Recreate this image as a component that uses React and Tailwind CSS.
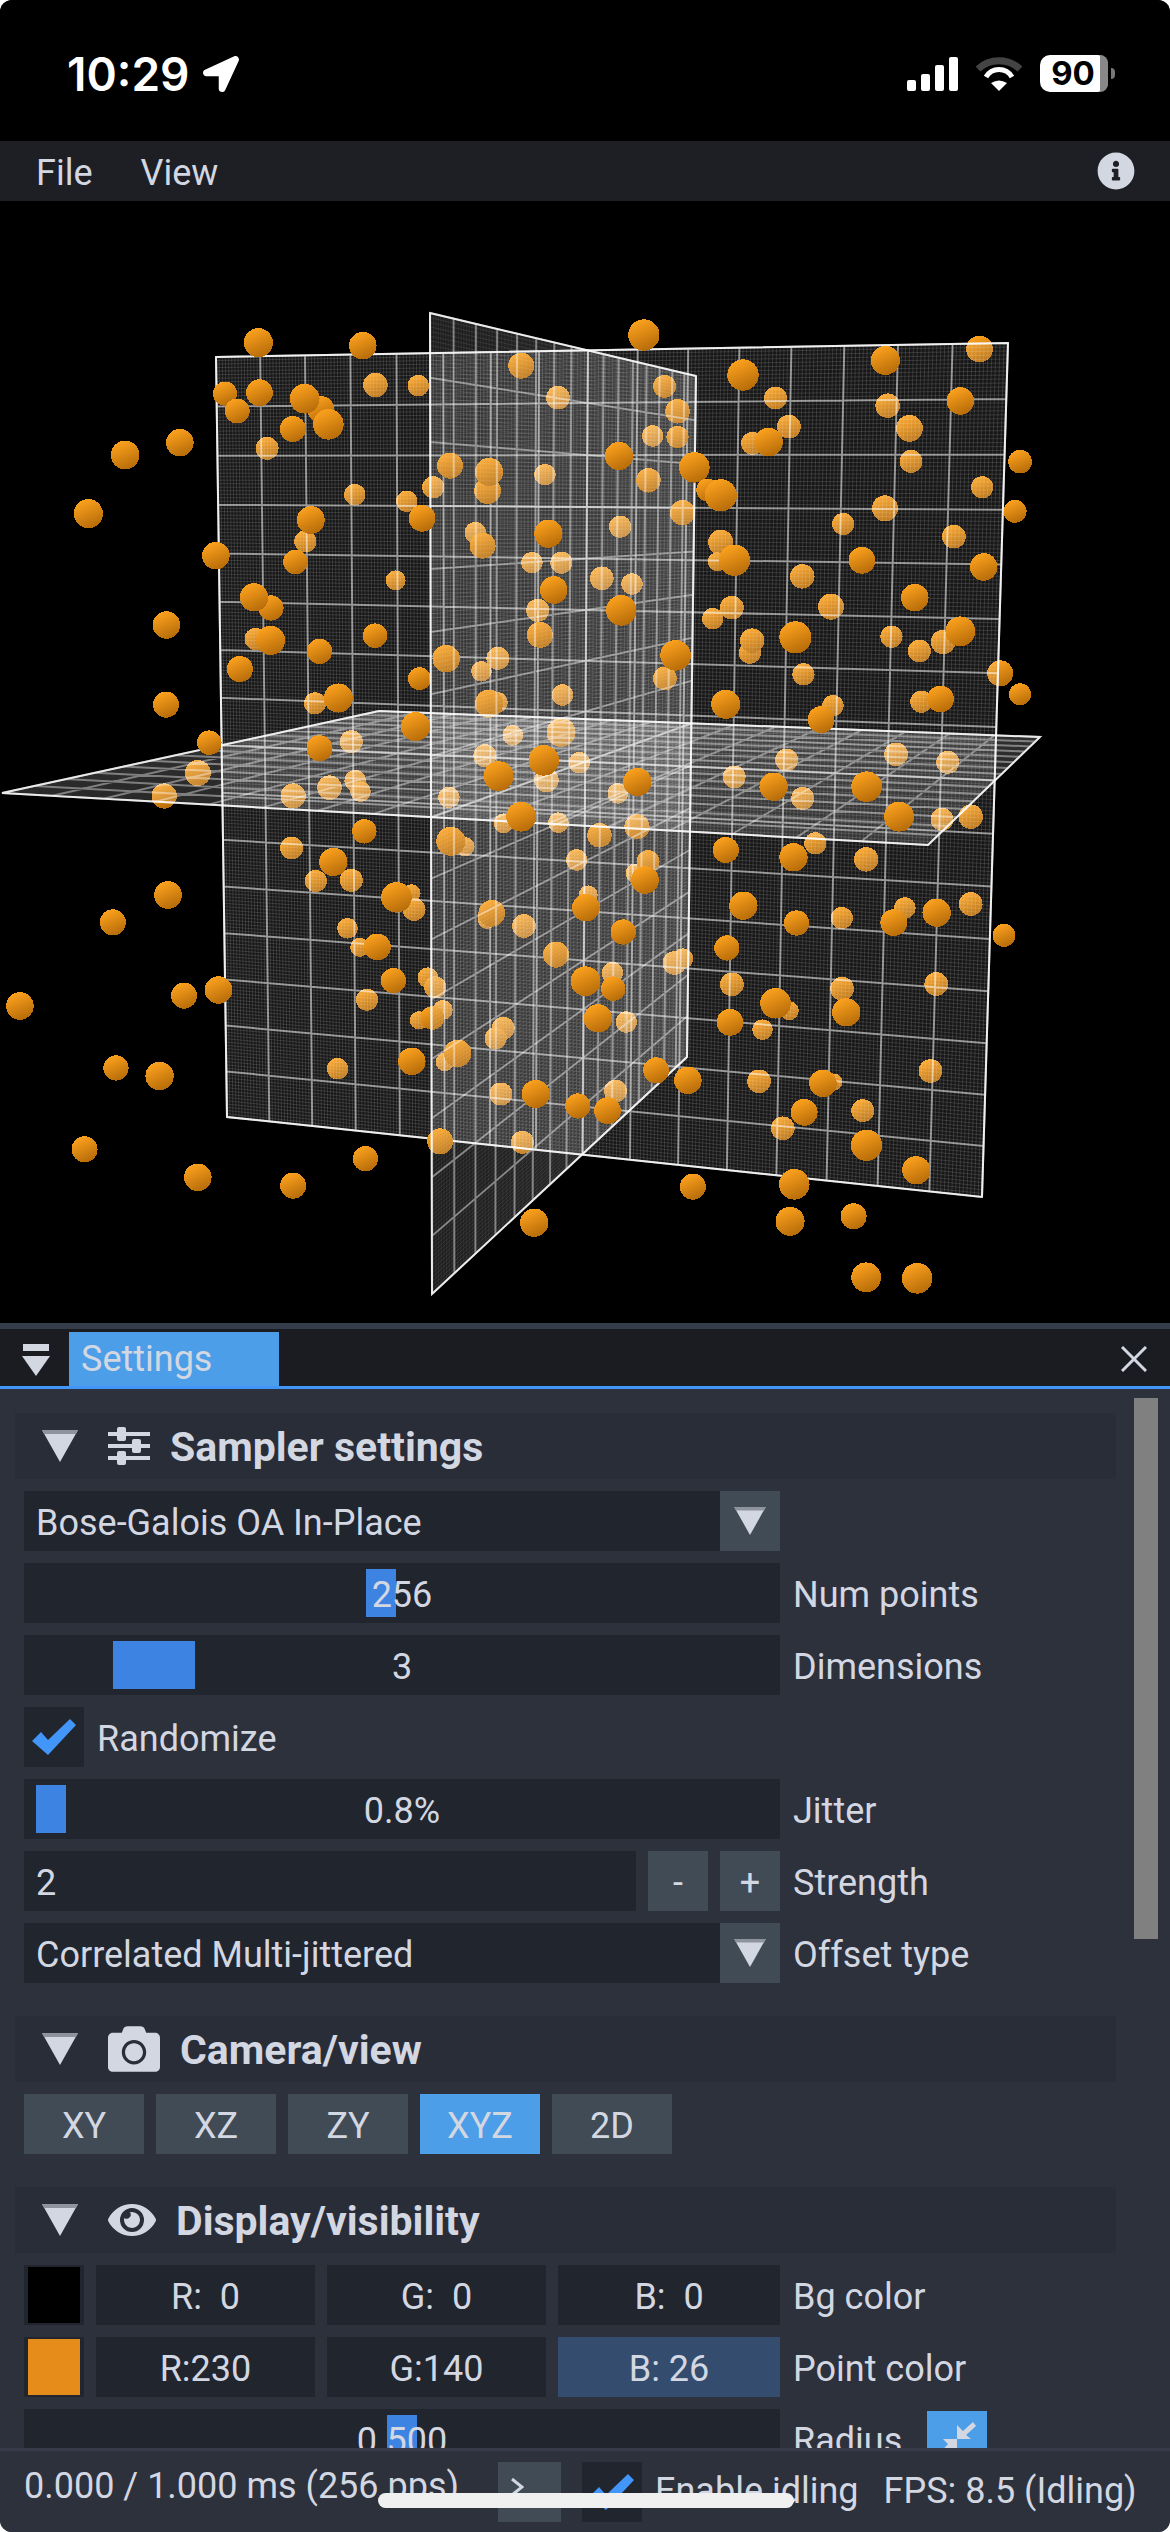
import React from 'react';
import { FaCamera, FaEye, FaInfoCircle, FaLocationArrow } from 'react-icons/fa';

// perspective map of the unit square onto a quad
const quadMap = ([p0, p1, p2, p3]) => {
  const dx1 = p1[0] - p2[0], dx2 = p3[0] - p2[0], sx = p0[0] - p1[0] + p2[0] - p3[0];
  const dy1 = p1[1] - p2[1], dy2 = p3[1] - p2[1], sy = p0[1] - p1[1] + p2[1] - p3[1];
  const den = dx1 * dy2 - dx2 * dy1;
  const g = (sx * dy2 - dx2 * sy) / den;
  const h = (dx1 * sy - sx * dy1) / den;
  const a = p1[0] - p0[0] + g * p1[0], b = p3[0] - p0[0] + h * p3[0], c = p0[0];
  const d = p1[1] - p0[1] + g * p1[1], e = p3[1] - p0[1] + h * p3[1], f = p0[1];
  return (u, v) => {
    const w = g * u + h * v + 1;
    return [(a * u + b * v + c) / w, (d * u + e * v + f) / w];
  };
};

const gridPath = (corners, divisions) => {
  const map = quadMap(corners);
  let out = '';
  for (let i = 0; i <= divisions; i++) {
    const t = i / divisions;
    const [ax, ay] = map(t, 0), [bx, by] = map(t, 1), [cx, cy] = map(0, t), [dx, dy] = map(1, t);
    out += `M${ax.toFixed(1)} ${ay.toFixed(1)}L${bx.toFixed(1)} ${by.toFixed(1)}M${cx.toFixed(1)} ${cy.toFixed(1)}L${dx.toFixed(1)} ${dy.toFixed(1)}`;
  }
  return out;
};

const PLANES = {
  back: [[216, 357], [1008, 343], [982, 1197], [227, 1117]],
  floor: [[2, 793], [379, 711], [1040, 737], [928, 845]],
  mid: [[430, 313], [696, 376], [687, 1057], [432, 1294]],
};

const Plane = ({ corners, fine = 0.13, major = 0.5 }) => (
  <g fill="none">
    <polygon points={corners.map((p) => p.join(',')).join(' ')} fill="#fff" fillOpacity="0.09" />
    <path d={gridPath(corners, 224)} stroke="#fff" strokeOpacity={fine} strokeWidth="1" />
    <path d={gridPath(corners, 16)} stroke="#fff" strokeOpacity={major} strokeWidth="2" />
    <polygon points={corners.map((p) => p.join(',')).join(' ')} stroke="#fff" strokeOpacity="0.85" strokeWidth="2" />
  </g>
);

// measured from the reference: [x, y, width, layer], layer 1 = behind back plane, 2 = behind mid plane, 0 = in front
const CROPS = [
  { ox: 0, oy: 280, pts: [
    [675,188,76,0],[948,197,72,0],[981,315,64,1],[1093,317,56,1],[588,341,63,0],[678,338,70,0],[838,388,70,0],[796,356,78,0],[858,433,80,0],[620,393,65,0],[765,447,68,0],[698,505,60,1],
    [327,525,75,0],[470,488,72,0],[231,701,76,0],[1362,257,68,2],[1458,353,62,1],[1176,557,68,2],[1274,632,70,2],[1278,576,74,2],[1132,622,58,1],[1424,584,56,1],[927,644,56,1],[1063,664,56,1],
    [1103,715,70,0],[812,720,73,0],[798,784,58,1],[772,846,64,0],[564,827,72,0],[1242,758,56,1],[1261,797,68,2],[1433,761,74,0],[1390,848,56,1],[1467,848,58,1],[1447,930,72,0],[1405,991,60,1],
    [1034,901,52,1],[708,984,66,0],[664,952,74,0],[1411,1065,68,2],[435,1035,72,0],[980,1067,64,0],[668,1077,58,1],[707,1081,76,0],[835,1114,66,0],[1166,1136,72,2],[1301,1135,60,1],[1258,1174,54,1],
    [627,1167,68,0],[1096,1196,60,2],[434,1274,68,0],[823,1270,58,1],[884,1254,76,0],[1300,1267,54,1],[1278,1271,74,2],[1470,1245,56,1],[1086,1340,76,0],[547,1388,64,0],[835,1405,68,0],[918,1385,60,1],
    [1340,1366,54,1],[1466,1357,76,2],[1267,1427,60,1],[1421,1441,80,0],[1514,1448,56,1],[1303,1488,78,0],[1428,1500,64,1],[517,1479,68,1],[429,1548,66,1],[928,1502,56,1],[861,1523,64,1],[942,1535,54,1],[766,1548,66,1],[1173,1552,56,1],
  ] },
  { ox: 570, oy: 280, pts: [
    [193,165,82,0],[1070,207,70,1],[824,241,76,0],[452,285,82,0],[247,319,60,2],[537,354,60,1],[830,377,64,1],[1020,363,72,0],[281,394,64,2],[572,440,62,1],[887,445,70,1],[216,468,56,1],[281,471,58,2],
    [477,490,60,1],[519,486,74,0],[128,528,74,0],[891,544,60,1],[1176,545,62,0],[325,562,80,0],[205,601,64,2],[1077,622,58,1],[360,630,60,0],[394,646,84,0],[823,685,68,1],[294,698,66,2],[1163,694,60,0],
    [714,732,58,1],[131,740,58,1],[1003,770,62,1],[394,787,66,1],[385,845,50,1],[430,841,82,0],[763,841,70,0],[1081,861,72,0],[607,889,64,1],[83,895,62,1],[162,912,56,1],[134,991,80,0],[901,953,72,0],
    [423,983,62,1],[682,980,68,1],[373,1016,56,1],[470,1118,58,1],[476,1082,64,1],[589,1072,84,0],[840,1070,58,1],[975,1086,64,1],[1020,1054,78,0],[913,1113,60,1],[276,1126,80,0],[248,1195,62,2],[610,1183,58,1],
    [1124,1180,68,1],[1176,1243,58,0],[407,1273,76,0],[687,1277,56,1],[656,1319,70,0],[918,1265,58,1],[975,1257,56,1],[968,1257,70,0],[852,1423,62,1],[987,1447,60,1],[566,1440,60,1],[429,1491,60,1],[176,1506,74,0],
    [532,1520,74,0],[775,1520,80,0],[125,1540,54,1],[608,1555,60,1],
  ] },
  { ox: 0, oy: 800, pts: [
    [952,94,64,0],[762,144,60,1],[1215,140,50,1],[1178,124,76,2],[1316,70,52,1],[1362,50,78,0],[1459,68,54,1],[871,186,74,0],[825,243,58,1],[918,241,60,1],[1507,180,56,1],[439,285,72,0],[295,367,68,0],
    [1075,280,48,1],[1082,328,60,1],[1036,292,80,0],[1273,358,50,1],[1285,340,70,2],[1369,378,62,1],[908,385,54,1],[940,442,50,1],[986,441,70,0],[1537,285,50,1],[1531,323,72,0],[1453,464,68,2],[1028,542,66,0],
    [1118,533,54,1],[1137,562,58,1],[1530,544,78,0],[959,599,58,1],[571,570,72,0],[481,587,68,0],[52,618,72,0],[1157,630,52,1],[1095,661,48,1],[1130,654,62,2],[1315,685,60,1],[1295,715,58,1],[1162,786,48,1],
    [1196,760,72,2],[1076,784,72,0],[882,806,56,1],[303,804,66,0],[417,828,74,0],[1309,882,60,1],[1400,882,74,0],[1510,918,66,0],[1150,1024,68,2],[1365,1027,60,1],[221,1048,68,0],[955,1076,66,0],[517,1132,72,0],
    [766,1157,68,0],[1396,1268,74,0],
  ] },
  { ox: 570, oy: 800, pts: [
    [860,50,78,0],[972,58,60,1],[1047,50,64,1],[77,106,64,2],[175,80,66,2],[204,185,60,2],[170,220,50,1],[196,240,72,0],[407,150,68,0],[584,172,74,0],[641,130,58,1],[774,178,64,1],[453,317,74,0],[592,369,66,0],
    [710,354,58,1],[875,324,56,1],[958,338,74,0],[846,368,70,0],[1047,312,62,1],[1134,406,60,0],[139,396,66,0],[410,444,66,0],[295,476,54,1],[273,489,62,1],[111,518,56,1],[113,566,64,0],[423,553,62,1],[711,566,62,1],
    [957,552,62,1],[573,632,50,1],[537,610,80,0],[722,637,74,0],[73,655,74,0],[147,666,56,1],[418,667,70,0],[503,689,54,1],[225,811,68,0],[308,841,72,0],[494,844,62,1],[690,846,44,1],[661,850,72,0],[942,813,62,1],
    [119,873,60,1],[98,932,70,0],[612,937,70,0],[765,932,60,1],[556,985,62,1],[775,1036,82,0],[905,1111,74,0],[586,1153,80,0],[321,1160,68,0],[575,1264,76,0],[741,1249,68,0],[774,1432,78,0],[907,1435,80,0],
  ] },
];

const POINTS = CROPS.flatMap(({ ox, oy, pts }) =>
  pts.map(([x, y, w, layer]) => ({ cx: ox + x / 2.613, cy: oy + y / 3, r: w / 2.613 / 2, layer }))
);

const Spheres = ({ layer }) => (
  <g fill="url(#sphere)" shapeRendering="crispEdges">
    {POINTS.filter((p) => p.layer === layer).map((p, i) => (
      <circle key={i} cx={p.cx} cy={p.cy} r={p.r} />
    ))}
  </g>
);

const Viewport = () => (
  <svg viewBox="0 201 1170 1122" className="block w-[1170px] h-[1122px] shrink-0 bg-black">
    <defs>
      <linearGradient id="sphere" x1="0.25" y1="0" x2="0.7" y2="1">
        <stop offset="0" stopColor="#ffa41f" />
        <stop offset="1" stopColor="#b46a08" />
      </linearGradient>
    </defs>
    <Spheres layer={1} />
    <Plane corners={PLANES.back} />
    <Spheres layer={2} />
    <Plane corners={PLANES.floor} fine={0.04} major={0.4} />
    <Plane corners={PLANES.mid} fine={0.09} major={0.42} />
    <Spheres layer={0} />
  </svg>
);

const Triangle = ({ className }) => (
  <svg viewBox="0 0 36 32" className={className}>
    <polygon points="0,0 36,0 18,32" fill="#d3d7e2" />
    <polygon points="0,0 36,0 34,4 2,4" fill="#8f939e" />
  </svg>
);

const Check = () => (
  <svg viewBox="0 0 44 36" className="w-[44px] h-[36px]">
    <polygon points="0,22 9,13 16,21 38,0 44,6 16,36" fill="#4296fa" />
  </svg>
);

const SlidersIcon = () => (
  <svg viewBox="0 0 42 38" className="w-[42px] h-[38px]" fill="#d3d7e2">
    <rect x="0" y="5" width="42" height="4" />
    <rect x="0" y="17" width="42" height="4" />
    <rect x="0" y="29" width="42" height="4" />
    <rect x="9" y="0" width="9" height="14" rx="2" />
    <rect x="24" y="12" width="9" height="14" rx="2" />
    <rect x="9" y="24" width="9" height="14" rx="2" />
  </svg>
);

const Section = ({ icon, title, gap }) => (
  <div className="flex h-[66px] w-[1101px] items-center bg-[#292d38] pl-[27px]">
    <Triangle className="w-[36px] h-[32px]" />
    <span className="ml-[30px] flex items-center">{icon}</span>
    <span className={`pt-[2px] text-[41px] font-bold ${gap}`}>{title}</span>
  </div>
);

const Row = ({ label, children }) => (
  <div className="flex h-[60px] items-center ml-[9px]">
    <div className="flex h-[60px] w-[756px] gap-[12px] shrink-0">{children}</div>
    {label && <span className="ml-[13px] pt-[3px]">{label}</span>}
  </div>
);

const Slider = ({ value, left, width }) => (
  <div className="relative flex h-[60px] w-[756px] shrink-0 items-center justify-center bg-[#21252e]">
    <div className="absolute top-[6px] bottom-[6px] bg-[#3d83e2]" style={{ left, width }} />
    <span className="relative pt-[3px]">{value}</span>
  </div>
);

const Combo = ({ value }) => (
  <div className="flex h-[60px] w-[756px]">
    <div className="flex flex-1 items-center bg-[#21252e] pl-[12px] pt-[3px]">{value}</div>
    <div className="flex w-[60px] items-center justify-center bg-[#414b56]">
      <Triangle className="w-[32px] h-[28px]" />
    </div>
  </div>
);

const Field = ({ children, className = '' }) => (
  <div className={`flex h-[60px] items-center justify-center whitespace-pre pt-[3px] ${className}`}>{children}</div>
);

const ColorRow = ({ swatch, r, g, b, active, label }) => (
  <Row label={label}>
    <div className="flex h-[60px] w-[60px] items-center justify-center bg-[#21252e]">
      <div className={`h-[56px] w-[52px] ${swatch}`} />
    </div>
    <Field className="w-[219px] bg-[#21252e]">{r}</Field>
    <Field className="w-[219px] bg-[#21252e]">{g}</Field>
    <Field className={`w-[222px] ${active ? 'bg-[#344d6e]' : 'bg-[#21252e]'}`}>{b}</Field>
  </Row>
);

const StatusBar = () => (
  <div className="flex h-[141px] shrink-0 bg-black text-white">
    <div className="ml-[67px] mt-[50px] flex h-[48px] items-center">
      <span className="text-[46px] font-semibold leading-none font-['Inter',sans-serif]">10:29</span>
      <FaLocationArrow className="ml-[13px] h-[36px] w-[36px]" />
    </div>
    <div className="ml-auto mr-[55px] mt-[55px] flex h-[37px] items-center">
      <svg viewBox="0 0 51 34" className="h-[34px] w-[51px]" fill="#fff">
        <rect x="0" y="23" width="9" height="11" rx="2" />
        <rect x="14" y="17" width="9" height="17" rx="2" />
        <rect x="28" y="8" width="9" height="26" rx="2" />
        <rect x="42" y="0" width="9" height="34" rx="2" />
      </svg>
      <svg viewBox="0 0 48 35" className="ml-[17px] h-[35px] w-[48px]" fill="none">
        <path d="M3 13 A31 31 0 0 1 45 13" stroke="#444" strokeWidth="7" />
        <path d="M11 21 A15 15 0 0 1 37 21" stroke="#fff" strokeWidth="5" />
        <path d="M24 35 L16 27 Q24 22 32 27 Z" fill="#fff" />
      </svg>
      <div className="relative ml-[17px] flex h-[37px] w-[68px] items-center rounded-[10px] bg-white">
        <div className="absolute right-0 h-full w-[8px] rounded-r-[10px] bg-[#888]" />
        <span className="w-[60px] pl-[6px] text-center text-[33px] font-bold leading-none text-black font-['Inter',sans-serif]">90</span>
      </div>
      <div className="ml-[3px] h-[11px] w-[4px] rounded-r-full bg-[#777]" />
    </div>
  </div>
);

export default function App() {
  return (
    <div className="relative flex h-[2532px] w-[1170px] flex-col overflow-hidden rounded-xl bg-[#2d313c] text-[36px] leading-none text-[#d3d7e2] font-['Roboto',sans-serif]">
      <StatusBar />

      <div className="flex h-[60px] shrink-0 items-center bg-[#1d1f25] pl-[36px] pr-[35px]">
        <span className="pt-[3px]">File</span>
        <span className="ml-[48px] pt-[3px]">View</span>
        <FaInfoCircle className="ml-auto h-[38px] w-[38px]" />
      </div>

      <Viewport />

      <div className="h-[6px] shrink-0 bg-[#353d4b]" />
      <div className="flex h-[57px] shrink-0 items-end bg-[#1a1c22] pl-[22px] pr-[23px]">
        <svg viewBox="0 0 28 32" className="mb-[10px] h-[32px] w-[28px]">
          <rect x="1" y="0" width="26" height="7" fill="#d3d7e2" />
          <polygon points="0,12 28,12 14,32" fill="#d3d7e2" />
        </svg>
        <div className="ml-[19px] flex h-[54px] w-[210px] items-center bg-[#4d9ee8] pl-[12px]">Settings</div>
        <svg viewBox="0 0 26 26" className="ml-auto mb-[14px] h-[26px] w-[26px]" stroke="#d3d7e2" strokeWidth="3">
          <path d="M1 1L25 25M25 1L1 25" />
        </svg>
      </div>
      <div className="h-[3px] shrink-0 bg-[#4296fa]" />

      <div className="flex min-h-0 flex-1 overflow-hidden">
        <div className="w-[1134px] shrink-0 pl-[15px] pt-[24px]">
          <Section icon={<SlidersIcon />} title="Sampler settings" gap="ml-[20px]" />
          <div className="mt-[12px] flex flex-col gap-[12px]">
            <Row><Combo value="Bose-Galois OA In-Place" /></Row>
            <Row label="Num points"><Slider value="256" left="342px" width="30px" /></Row>
            <Row label="Dimensions"><Slider value="3" left="89px" width="82px" /></Row>
            <div className="ml-[9px] flex h-[60px] items-center">
              <div className="flex h-[60px] w-[60px] items-center justify-center bg-[#21252e]"><Check /></div>
              <span className="ml-[13px] pt-[3px]">Randomize</span>
            </div>
            <Row label="Jitter"><Slider value="0.8%" left="12px" width="30px" /></Row>
            <Row label="Strength">
              <div className="flex h-[60px] w-[612px] items-center bg-[#21252e] pl-[12px] pt-[3px]">2</div>
              <Field className="w-[60px] bg-[#414b56]">-</Field>
              <Field className="w-[60px] bg-[#414b56]">+</Field>
            </Row>
            <Row label="Offset type"><Combo value="Correlated Multi-jittered" /></Row>
          </div>

          <div className="mt-[33px]">
            <Section icon={<FaCamera className="h-[52px] w-[52px]" />} title="Camera/view" gap="ml-[20px]" />
          </div>
          <div className="ml-[9px] mt-[12px] flex gap-[12px]">
            {['XY', 'XZ', 'ZY', 'XYZ', '2D'].map((view) => (
              <Field key={view} className={`w-[120px] ${view === 'XYZ' ? 'bg-[#4d9ee8]' : 'bg-[#414b56]'}`}>{view}</Field>
            ))}
          </div>

          <div className="mt-[33px]">
            <Section icon={<FaEye className="h-[48px] w-[48px]" />} title="Display/visibility" gap="ml-[20px]" />
          </div>
          <div className="mt-[12px] flex flex-col gap-[12px]">
            <ColorRow swatch="bg-black" r="R:  0" g="G:  0" b="B:  0" label="Bg color" />
            <ColorRow swatch="bg-[#e68c1a]" r="R:230" g="G:140" b="B: 26" active label="Point color" />
            <Row
              label={
                <span className="flex items-center">
                  <span className="w-[134px]">Radius</span>
                  <span className="flex h-[60px] w-[60px] bg-[#4d9ee8]">
                    <svg viewBox="0 0 60 60" className="h-[60px] w-[60px]" fill="#d3d7e2">
                      <polygon points="30,14 30,28 44,28 39,24 49,15 46,11 36,20" />
                      <polygon points="16,28 30,28 30,42 26,38 16,47 12,43 21,33" />
                    </svg>
                  </span>
                </span>
              }
            >
              <Slider value="0.500" left="363px" width="30px" />
            </Row>
          </div>
        </div>
        <div className="mt-[9px] h-[541px] w-[24px] bg-[#808080]" />
      </div>

      <div className="z-10 flex h-[84px] shrink-0 items-center border-t-[3px] border-[#353b49] bg-[#2d313c] pl-[24px]">
        <span className="mb-[11px] w-[474px]">0.000 / 1.000 ms (256 pps)</span>
        <div className="flex h-[60px] w-[63px] items-start bg-[#414b56] pl-[12px] pt-[16px]">
          <svg viewBox="0 0 14 18" className="h-[18px] w-[14px]" fill="none" stroke="#d3d7e2" strokeWidth="3">
            <path d="M2 1L12 9L2 17" />
          </svg>
        </div>
        <div className="ml-[21px] flex h-[60px] w-[60px] items-center justify-center bg-[#21252e]"><Check /></div>
        <span className="mb-[2px] ml-[13px]">Enable idling</span>
        <span className="mb-[2px] ml-[25px]">FPS: 8.5 (Idling)</span>
      </div>

      <div className="absolute bottom-[24px] left-[378px] z-20 h-[15px] w-[416px] rounded-full bg-[#f0f0f0]" />
    </div>
  );
}
